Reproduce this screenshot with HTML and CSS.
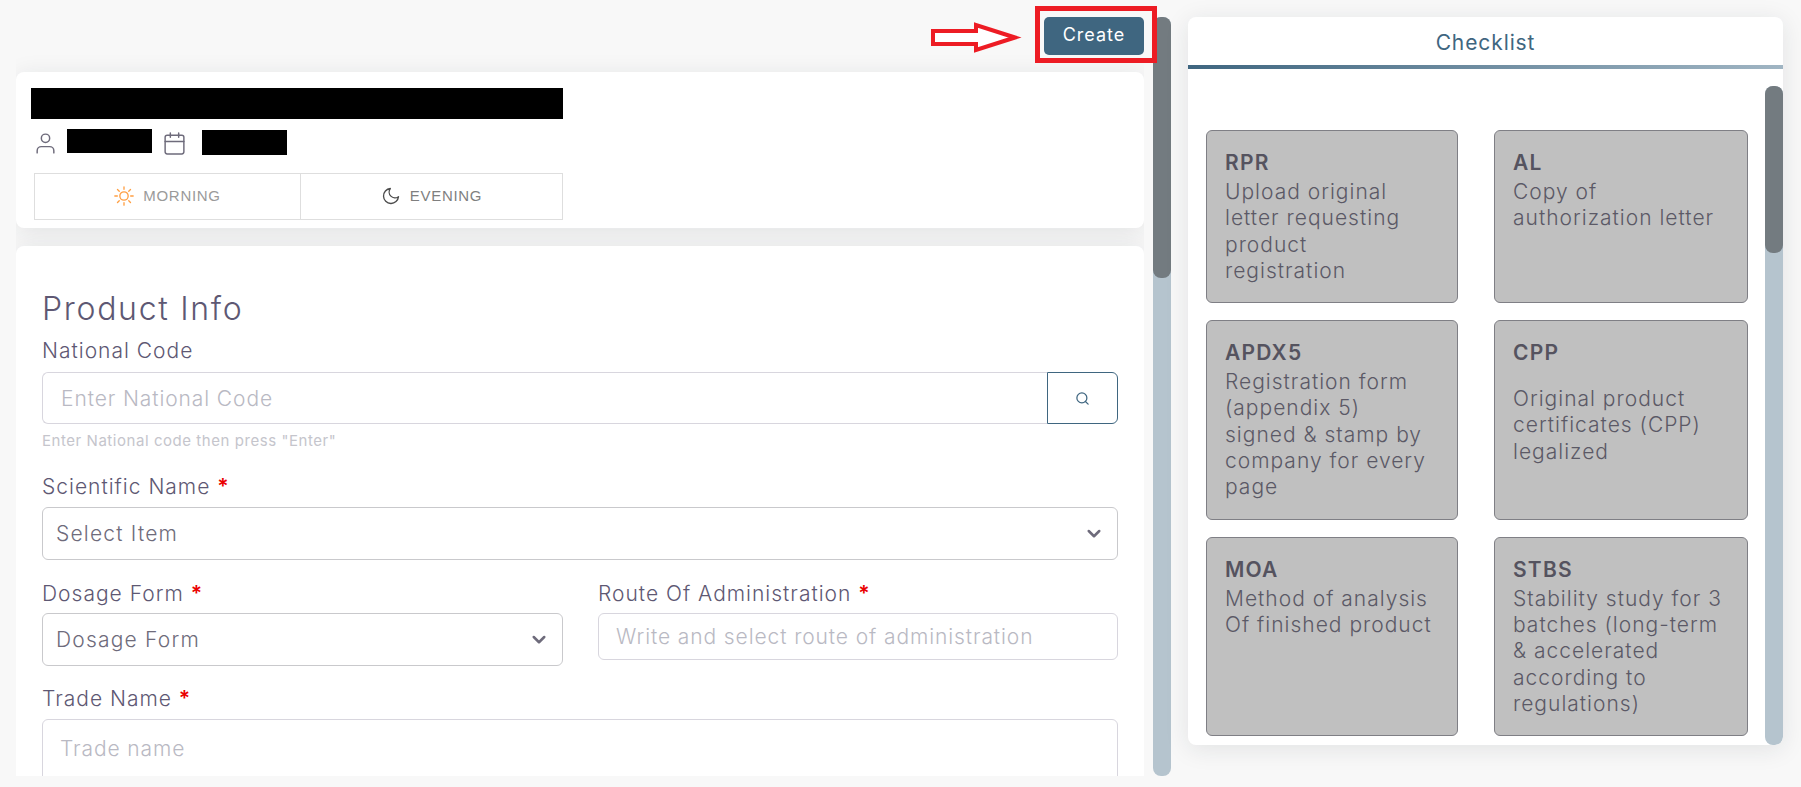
FILE: index.html
```html
<!DOCTYPE html>
<html lang="en">
<head>
    <meta charset="UTF-8">
    <meta name="viewport" content="width=device-width, initial-scale=1.0">
    <title>Product Info</title>
    <link rel="stylesheet" href="styles.css">
</head>
<body>
    <div class="page">
        <main class="main-col">
            <div class="toolbar">
                <button class="btn-create" type="button">Create</button>
            </div>

            <section class="card info-card">
                <div class="redacted redacted-title"></div>
                <div class="meta-row">
                    <svg class="icon icon-user" viewBox="0 0 24 24"><path d="M20 21v-2a4 4 0 0 0-4-4H8a4 4 0 0 0-4 4v2"/><circle cx="12" cy="7" r="4"/></svg>
                    <div class="redacted redacted-name"></div>
                    <svg class="icon icon-calendar" viewBox="0 0 24 24"><rect x="3" y="4" width="18" height="18" rx="2"/><path d="M16 2v4M8 2v4M3 10h18"/></svg>
                    <div class="redacted redacted-date"></div>
                </div>
                <div class="shift-toggle">
                    <div class="shift shift-morning">
                        <svg class="shift-icon sun" viewBox="0 0 24 24"><circle cx="12" cy="12" r="5"/><path d="M12 1v3M12 20v3M4.2 4.2l2.1 2.1M17.7 17.7l2.1 2.1M1 12h3M20 12h3M4.2 19.8l2.1-2.1M17.7 6.3l2.1-2.1"/></svg>
                        <span>MORNING</span>
                    </div>
                    <div class="shift shift-evening">
                        <svg class="shift-icon moon" viewBox="0 0 24 24"><path d="M21 12.8A9 9 0 1 1 11.2 3a7 7 0 0 0 9.8 9.8z"/></svg>
                        <span>EVENING</span>
                    </div>
                </div>
            </section>

            <section class="card form-card">
                <h2 class="form-title">Product Info</h2>

                <label class="field-label label-national">National Code</label>
                <div class="search-group">
                    <div class="input search-input placeholder">Enter National Code</div>
                    <button class="btn-search" type="button">
                        <svg class="search-icon" viewBox="0 0 24 24"><circle cx="11" cy="11" r="8"/><path d="M21 21l-4.3-4.3"/></svg>
                    </button>
                </div>
                <p class="help-text">Enter National code then press "Enter"</p>

                <label class="field-label label-scientific">Scientific Name <span class="req">*</span></label>
                <div class="select">
                    <span>Select Item</span>
                    <svg class="chevron" viewBox="0 0 24 24"><path d="M5 8l7 7 7-7"/></svg>
                </div>

                <div class="form-row">
                    <div>
                        <label class="field-label">Dosage Form <span class="req">*</span></label>
                        <div class="select">
                            <span>Dosage Form</span>
                            <svg class="chevron" viewBox="0 0 24 24"><path d="M5 8l7 7 7-7"/></svg>
                        </div>
                    </div>
                    <div>
                        <label class="field-label">Route Of Administration <span class="req">*</span></label>
                        <div class="input route-input placeholder">Write and select route of administration</div>
                    </div>
                </div>

                <label class="field-label label-trade">Trade Name <span class="req">*</span></label>
                <div class="input trade-input placeholder">Trade name</div>
            </section>
        </main>

        <div class="scroll-track main-track">
            <div class="scroll-thumb main-thumb"></div>
        </div>

        <aside class="card checklist">
            <div class="checklist-head">Checklist</div>
            <div class="checklist-line"></div>
            <div class="checklist-body">
                <div class="checklist-grid">
                    <div class="doc">
                        <div class="doc-code">RPR</div>
                        <div class="doc-text">Upload original<br>letter requesting<br>product<br>registration</div>
                    </div>
                    <div class="doc">
                        <div class="doc-code">AL</div>
                        <div class="doc-text">Copy of<br>authorization letter</div>
                    </div>
                    <div class="doc">
                        <div class="doc-code">APDX5</div>
                        <div class="doc-text">Registration form<br>(appendix 5)<br>signed &amp; stamp by<br>company for every<br>page</div>
                    </div>
                    <div class="doc">
                        <div class="doc-code">CPP</div>
                        <div class="doc-text doc-text-low">Original product<br>certificates (CPP)<br>legalized</div>
                    </div>
                    <div class="doc">
                        <div class="doc-code">MOA</div>
                        <div class="doc-text">Method of analysis<br>Of finished product</div>
                    </div>
                    <div class="doc">
                        <div class="doc-code">STBS</div>
                        <div class="doc-text">Stability study for 3<br>batches (long-term<br>&amp; accelerated<br>according to<br>regulations)</div>
                    </div>
                </div>
                <div class="scroll-track side-track">
                    <div class="scroll-thumb side-thumb"></div>
                </div>
            </div>
        </aside>
    </div>

    <!-- Anotacoes em vermelho por cima da tela -->
    <div class="mark-box"></div>
    <svg class="mark-arrow" viewBox="0 0 92 32"><path d="M3 9H46V3L85 15.5L46 28V22H3Z"/></svg>
</body>
</html>
```

FILE: styles.css
```css
* {
    box-sizing: border-box;
}
html, body {
    margin: 0;
    height: 100%;
    overflow: hidden;
}
body {
    position: relative;
    background-color: #f8f8f8;
    font-family: "Inter", "Open Sans", sans-serif;
    font-weight: 300;
    color: #6e6b7b;
}
.page {
    display: flex;
    align-items: flex-start;
    padding: 17px 18px 0 16px;
}
.card {
    background-color: #fff;
    border-radius: 8px;
    box-shadow: 0 4px 24px 0 rgba(34, 41, 47, 0.1);
}

/* Coluna principal */
.main-col {
    width: 1128px;
    height: 759px;
    overflow: hidden;
    flex-shrink: 0;
}
.toolbar {
    display: flex;
    justify-content: flex-end;
    height: 38px;
    margin-bottom: 17px;
}
.btn-create {
    width: 100px;
    height: 38px;
    padding: 0 0 3px;
    border: none;
    border-radius: 5px;
    background-color: #3f6680;
    color: #fff;
    font-family: inherit;
    font-size: 18px;
    font-weight: 400;
    letter-spacing: 1px;
    cursor: pointer;
}
.info-card {
    height: 156px;
    padding: 16px 0 0 15px;
    margin-bottom: 18px;
}
.redacted {
    background-color: #000;
}
.redacted-title {
    width: 532px;
    height: 31px;
}
.meta-row {
    display: flex;
    align-items: flex-start;
    height: 26px;
    margin-top: 10px;
}
.redacted-name {
    width: 85px;
    height: 24px;
}
.redacted-date {
    width: 85px;
    height: 25px;
    margin-top: 1px;
}
.icon {
    width: 25px;
    height: 25px;
    margin-top: 2px;
    fill: none;
    stroke: #6e6b7b;
    stroke-width: 1.4;
    stroke-linecap: round;
    stroke-linejoin: round;
}
.icon-user {
    margin-left: 2px;
    margin-right: 9px;
}
.icon-calendar {
    margin-left: 10px;
    margin-right: 15px;
}
.shift-toggle {
    display: flex;
    width: 529px;
    height: 47px;
    margin: 18px 0 0 3px;
    border: 1px solid #dedede;
}
.shift {
    display: flex;
    align-items: center;
    justify-content: center;
    gap: 9px;
    padding-bottom: 2px;
    font-family: "Liberation Sans", Arial, sans-serif;
    font-size: 15px;
    font-weight: 400;
    letter-spacing: 0.7px;
}
.shift-morning {
    width: 266px;
    border-right: 1px solid #dedede;
    color: #9a9a9a;
}
.shift-evening {
    flex: 1;
    color: #7f7f7f;
}
.shift-icon {
    width: 20px;
    height: 20px;
    fill: none;
    stroke-width: 1.6;
    stroke-linecap: round;
    stroke-linejoin: round;
}
.sun {
    stroke: #ff9f43;
}
.moon {
    stroke: #4b4b4b;
}

/* Formulario */
.form-card {
    height: 700px;
    padding: 44px 26px 0 26px;
    letter-spacing: 0.9px;
}
.form-title {
    margin: 0 0 11px;
    font-size: 32px;
    line-height: 38px;
    font-weight: 300;
    letter-spacing: 1.7px;
    color: #5e5873;
}
.field-label {
    display: block;
    height: 24px;
    line-height: 24px;
    margin-bottom: 7px;
    font-size: 21px;
    letter-spacing: 1px;
    color: #5e5873;
    white-space: nowrap;
}
.label-national {
    margin-bottom: 9px;
}
.label-scientific {
    margin-top: 25px;
    margin-bottom: 8px;
}
.label-trade {
    margin-top: 21px;
    margin-bottom: 8px;
}
.req {
    color: #ea0000;
    font-weight: 600;
}
.input {
    display: flex;
    align-items: center;
    padding-left: 18px;
    border: 1px solid #d8d6de;
    border-radius: 6px;
    font-size: 21px;
}
.placeholder {
    color: #b9b9c3;
}
.search-group {
    display: flex;
    height: 52px;
}
.search-input {
    flex: 1;
    border-right: none;
    border-radius: 6px 0 0 6px;
}
.btn-search {
    display: flex;
    align-items: center;
    justify-content: center;
    width: 71px;
    padding: 0;
    background: #fff;
    border: 1px solid #3f6680;
    border-radius: 0 6px 6px 0;
}
.search-icon {
    width: 15px;
    height: 15px;
    fill: none;
    stroke: #3f6680;
    stroke-width: 2;
    stroke-linecap: round;
}
.help-text {
    height: 18px;
    margin: 8px 0 0;
    line-height: 18px;
    font-size: 15px;
    font-weight: 400;
    letter-spacing: 0.55px;
    color: #c5c5cc;
}
.select {
    display: flex;
    align-items: center;
    justify-content: space-between;
    height: 53px;
    padding: 0 14px 0 13px;
    border: 1px solid #c9c9cc;
    border-radius: 6px;
    font-size: 21px;
    letter-spacing: 1.2px;
}
.chevron {
    width: 18px;
    height: 18px;
    fill: none;
    stroke: #6e6b7b;
    stroke-width: 3.4;
    stroke-linecap: round;
    stroke-linejoin: round;
}
.form-row {
    display: grid;
    grid-template-columns: 521px 520px;
    column-gap: 35px;
    align-items: start;
    margin-top: 22px;
}
.route-input {
    height: 47px;
    padding-left: 17px;
}
.trade-input {
    height: 100px;
    padding-left: 17px;
    align-items: flex-start;
    padding-top: 16px;
}

/* Barras de rolagem */
.scroll-track {
    flex-shrink: 0;
    width: 18px;
    background-color: #b5c4ce;
    border-radius: 8px;
}
.scroll-thumb {
    background-color: #737b80;
    border-radius: 8px;
}
.main-track {
    height: 759px;
    margin: 0 17px 0 9px;
}
.main-thumb {
    height: 261px;
}
.side-track {
    height: 659px;
    margin-top: 17px;
}
.side-thumb {
    height: 167px;
}

/* Checklist */
.checklist {
    width: 595px;
    height: 728px;
    flex-shrink: 0;
    overflow: hidden;
}
.checklist-head {
    height: 48px;
    padding-top: 12px;
    line-height: 28px;
    text-align: center;
    font-size: 21px;
    font-weight: 400;
    letter-spacing: 0.9px;
    color: #3f6680;
}
.checklist-line {
    height: 4px;
    background: linear-gradient(to right, #3f6680, #a0b5c3);
}
.checklist-body {
    display: flex;
    justify-content: space-between;
    padding-left: 18px;
}
.checklist-grid {
    display: grid;
    grid-template-columns: 252px 254px;
    column-gap: 36px;
    row-gap: 17px;
    align-content: start;
    padding-top: 61px;
}
.doc {
    padding: 19px 6px 18px 18px;
    background-color: #c0c0c0;
    border: 1px solid #7f7f85;
    border-radius: 6px;
    font-size: 21px;
    line-height: 26px;
    color: #5b5966;
    white-space: nowrap;
}
.doc-code {
    font-weight: 600;
    letter-spacing: 1.2px;
    color: #55535f;
}
.doc-text {
    margin-top: 3px;
    line-height: 26.3px;
    letter-spacing: 1px;
}
.doc-text-low {
    margin-top: 20px;
}

/* Anotacoes */
.mark-box {
    position: absolute;
    left: 1035px;
    top: 6px;
    width: 122px;
    height: 57px;
    border: 5px solid #ed1c24;
}
.mark-arrow {
    position: absolute;
    left: 930px;
    top: 22px;
    width: 92px;
    height: 32px;
    fill: #fff;
    stroke: #ed1c24;
    stroke-width: 4;
}
```
